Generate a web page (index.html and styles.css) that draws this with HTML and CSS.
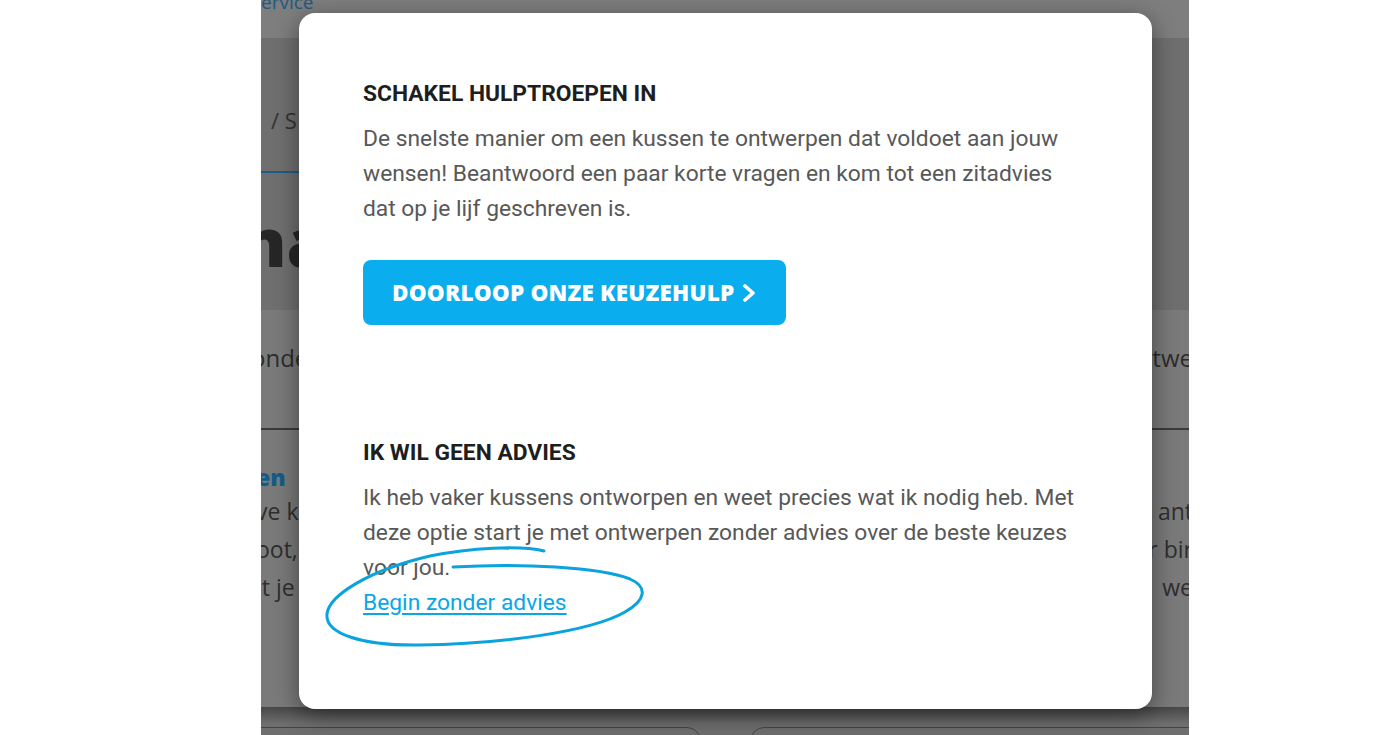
FILE: index.html
```html
<!DOCTYPE html>
<html lang="nl">
<head>
<meta charset="utf-8">
<title>Keuzehulp</title>
<link rel="stylesheet" href="styles.css">
</head>
<body>
<div class="shot">
  <div class="page">
    <div class="topbar"><span class="service">ervice</span></div>
    <div class="header">
      <div class="crumb">/ S</div>
      <div class="tabline"></div>
      <div class="title">na</div>
    </div>
    <div class="tabs">
      <span class="tab-left">onde</span>
      <span class="tab-right">twe</span>
    </div>
    <div class="content">
      <div class="col col-left">
        <div class="col-title">en</div>
        <div class="line">ve ku</div>
        <div class="line">oot,</div>
        <div class="line">it je</div>
      </div>
      <div class="col col-right">
        <div class="col-title">&nbsp;</div>
        <div class="line">ant</div>
        <div class="line">r bir</div>
        <div class="line">we</div>
      </div>
    </div>
    <div class="bottom">
      <div class="card card-a"></div>
      <div class="card card-b"></div>
    </div>
  </div>

  <div class="modal">
    <section class="block">
      <h2 class="heading">SCHAKEL HULPTROEPEN IN</h2>
      <p class="text">De snelste manier om een kussen te ontwerpen dat voldoet aan jouw wensen! Beantwoord een paar korte vragen en kom tot een zitadvies dat op je lijf geschreven is.</p>
      <a class="btn" href="#">DOORLOOP ONZE KEUZEHULP
        <svg class="chev" viewBox="0 0 14 18" width="14" height="18"><path d="M3 2 L11 9 L3 16" fill="none" stroke="#fff" stroke-width="3.6" stroke-linecap="round" stroke-linejoin="round"/></svg>
      </a>
    </section>
    <section class="block block-second">
      <h2 class="heading">IK WIL GEEN ADVIES</h2>
      <p class="text">Ik heb vaker kussens ontworpen en weet precies wat ik nodig heb. Met deze optie start je met ontwerpen zonder advies over de beste keuzes voor jou.</p>
      <a class="link" href="#">Begin zonder advies</a>
    </section>
  </div>
</div>
<svg class="scribble" viewBox="0 0 1400 735" width="1400" height="735">
  <path d="M453 567 C 520 563, 600 567, 630 579 C 648 587, 646 600, 625 612 C 590 632, 500 644, 420 645 C 360 646, 325 633, 327 614 C 329 595, 370 570, 430 556 C 470 548, 520 545, 544 551" fill="none" stroke="#0aa3de" stroke-width="3" stroke-linecap="round"/>
</svg>
</body>
</html>
```

FILE: styles.css
```css
html, body {
  margin: 0;
  padding: 0;
  background: #ffffff;
  width: 1400px;
  height: 735px;
  overflow: hidden;
  font-family: Roboto, "Liberation Sans", Arial, sans-serif;
}

.shot {
  position: relative;
  margin-left: 261px;
  width: 928px;
  height: 735px;
  overflow: hidden;
}

.page {
  display: flex;
  flex-direction: column;
  height: 735px;
  color: #2e2e2e;
}

.topbar {
  height: 38px;
  background: #7e7e7e;
  overflow: hidden;
}

.service {
  display: block;
  margin-top: -9px;
  font-size: 19px;
  line-height: 22px;
  color: #1c5b82;
  font-family: "Open Sans", sans-serif;
}

.header {
  height: 272px;
  background: #6f6f6f;
  display: flex;
  flex-direction: column;
}

.crumb {
  margin-top: 68px;
  padding-left: 10px;
  font-size: 22px;
  line-height: 28px;
  color: #333;
  font-family: "Open Sans", sans-serif;
}

.tabline {
  margin-top: 37px;
  width: 40px;
  height: 2px;
  background: #1c5d86;
}

.title {
  margin-top: 32px;
  margin-left: -20px;
  font-family: "Open Sans", sans-serif;
  font-weight: 800;
  font-size: 68px;
  line-height: 72px;
  color: #262626;
}

.tabs {
  height: 120px;
  box-sizing: border-box;
  padding-top: 32px;
  background: #7a7a7a;
  border-bottom: 2px solid #3a3a3a;
  display: flex;
  justify-content: space-between;
  align-items: flex-start;
  font-family: "Open Sans", sans-serif;
  font-size: 24px;
  line-height: 32px;
  color: #2c2c2c;
}

.tab-left { margin-left: -10px; }
.tab-right { margin-right: -4px; }

.content {
  height: 277px;
  background: #7a7a7a;
  display: flex;
  justify-content: space-between;
  font-family: "Open Sans", sans-serif;
  font-size: 23px;
  color: #2e2e2e;
}

.col {
  padding-top: 32px;
  display: flex;
  flex-direction: column;
}

.col-left { margin-left: -5px; }
.col-right { margin-right: -4px; text-align: right; }

.col-title {
  font-weight: 800;
  color: #125d88;
  line-height: 30px;
}

.line {
  line-height: 38px;
}

.bottom {
  flex: 1;
  background: linear-gradient(#474747, #6e6e6e 60%);
  position: relative;
}

.card {
  position: absolute;
  top: 20px;
  height: 30px;
  border: 1px solid #454545;
  border-radius: 14px;
}

.card-a { left: -20px; width: 458px; }
.card-b { left: 489px; width: 460px; }

.modal {
  position: absolute;
  left: 38px;
  top: 13px;
  width: 853px;
  height: 696px;
  box-sizing: border-box;
  background: #ffffff;
  border-radius: 16px;
  box-shadow: 0 6px 24px rgba(0, 0, 0, 0.45);
  padding: 63px 64px 0 64px;
}

.block {
  display: flex;
  flex-direction: column;
  align-items: flex-start;
}

.block-second {
  margin-top: 110px;
}

.heading {
  margin: 0;
  font-size: 22.8px;
  line-height: 35px;
  font-weight: 700;
  color: #1e1e1e;
}

.text {
  margin: 10px 0 0 0;
  font-size: 22.8px;
  line-height: 35px;
  color: #585858;
}

.btn {
  margin-top: 34px;
  display: flex;
  align-items: center;
  gap: 8px;
  height: 65px;
  padding: 0 30px 0 29px;
  box-sizing: border-box;
  background: #0aaeef;
  border-radius: 8px;
  color: #ffffff;
  text-decoration: none;
  font-family: "Open Sans", sans-serif;
  font-weight: 800;
  font-size: 22.5px;
  letter-spacing: 0.2px;
}

.chev { display: block; }

.link {
  font-size: 22.8px;
  line-height: 35px;
  color: #0aa7e6;
  text-decoration: underline;
  text-underline-offset: 3px;
}

.scribble {
  position: absolute;
  left: 0;
  top: 0;
  pointer-events: none;
}
```
